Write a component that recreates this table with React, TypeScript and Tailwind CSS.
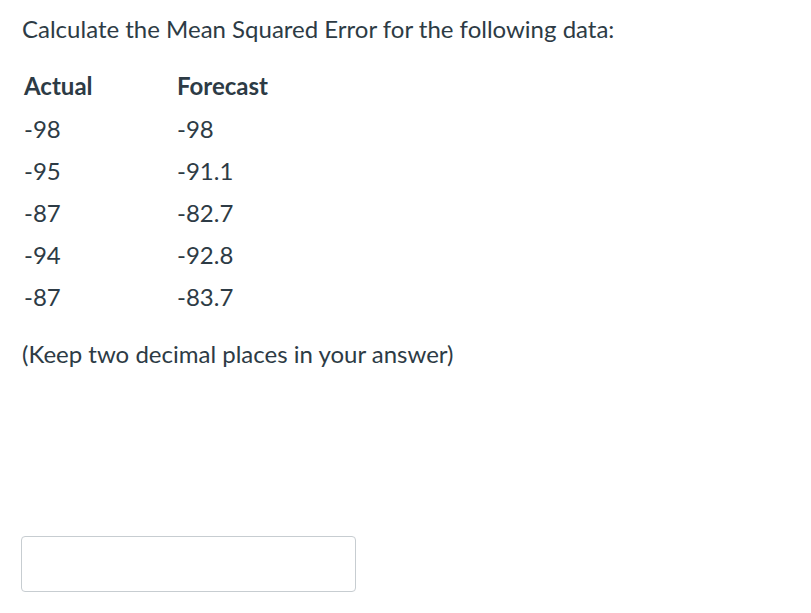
export default function App() {
  const rows = [
    ["-98", "-98"],
    ["-95", "-91.1"],
    ["-87", "-82.7"],
    ["-94", "-92.8"],
    ["-87", "-83.7"],
  ];
  return (
    <div className="w-[811px] h-[613px] bg-white text-[#2d3b45] font-['Lato',sans-serif] overflow-hidden">
      <div className="pl-[22px] pt-[12px]">
        <p className="text-[24px] leading-[34px]">Calculate the Mean Squared Error for the following data:</p>
        <table className="mt-[18px] ml-[2px] border-collapse">
          <thead>
            <tr className="h-[44px]">
              <th className="w-[153px] text-left font-bold text-[24px] p-0">Actual</th>
              <th className="text-left font-bold text-[24px] p-0">Forecast</th>
            </tr>
          </thead>
          <tbody>
            {rows.map((r, i) => (
              <tr key={i} className="h-[42px]">
                <td className="p-0 text-[24px] align-middle">{r[0]}</td>
                <td className="p-0 text-[24px] align-middle">{r[1]}</td>
              </tr>
            ))}
          </tbody>
        </table>
        <p className="mt-[20px] text-[24px] leading-[32px]">(Keep two decimal places in your answer)</p>
        <input
          type="text"
          className="-ml-px mt-[166px] block w-[335px] h-[56px] border border-[#c7cdd1] rounded-[4px] bg-white outline-none"
        />
      </div>
    </div>
  );
}
